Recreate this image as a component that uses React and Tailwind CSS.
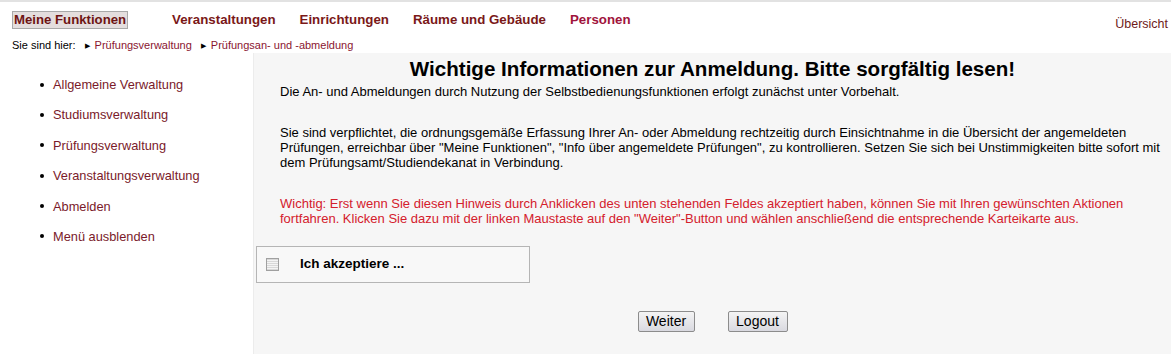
import React from 'react';

const navItems = ['Veranstaltungen', 'Einrichtungen', 'Räume und Gebäude'];

const sideItems = [
  'Allgemeine Verwaltung',
  'Studiumsverwaltung',
  'Prüfungsverwaltung',
  'Veranstaltungsverwaltung',
  'Abmelden',
  'Menü ausblenden',
];

const App = () => {
  return (
    <div className="w-[1171px] h-[354px] overflow-hidden bg-white font-['Liberation_Sans',Arial,sans-serif] text-black">
      {/* top line */}
      <div className="h-[2px] bg-[#e2e2e2]"></div>

      {/* main navigation */}
      <div className="flex items-start h-[34px] pt-[9px]">
        <span className="ml-[12px] px-[1px] border border-[#a9a9a9] bg-[#e4dede] text-[13.2px] leading-[16px] font-bold text-[#6e1414]">
          Meine Funktionen
        </span>
        <div className="flex ml-[44px] gap-[24px]">
          {navItems.map((item) => (
            <span key={item} className="text-[13.3px] leading-[18px] font-bold text-[#7a1818]">
              {item}
            </span>
          ))}
          <span className="text-[13.3px] leading-[18px] font-bold text-[#a0143c]">Personen</span>
        </div>
        <span className="ml-auto mt-[6px] mr-[3px] text-[12.5px] leading-[15px] text-[#6e1a1a]">Übersicht</span>
      </div>

      {/* breadcrumb */}
      <div className="flex items-center h-[17px] pl-[12px] pt-[1px] text-[11px] leading-[13px]">
        <span>Sie sind hier:</span>
        <span className="ml-[9px] mr-[5px] text-[7px] text-black">&#9654;</span>
        <span className="text-[#8a1530]">Prüfungsverwaltung</span>
        <span className="ml-[9px] mr-[5px] text-[7px] text-black">&#9654;</span>
        <span className="text-[#8a1530]">Prüfungsan- und -abmeldung</span>
      </div>

      <div className="flex h-[301px]">
        {/* sidebar */}
        <div className="w-[253px] shrink-0 bg-white pt-[24px]">
          <ul className="flex flex-col gap-[15.4px] pl-[40px]">
            {sideItems.map((item) => (
              <li key={item} className="flex items-center text-[12.8px] leading-[15px] text-[#7a1a2a]">
                <span className="w-[4px] h-[4px] bg-black rounded-full mr-[9px]"></span>
                {item}
              </li>
            ))}
          </ul>
        </div>

        {/* content */}
        <div className="flex-1 bg-[#f6f6f6] border-l border-[#ececec] pt-[4px]">
          <h1 className="text-center text-[20.6px] leading-[24px] font-bold">
            Wichtige Informationen zur Anmeldung. Bitte sorgfältig lesen!
          </h1>
          <div className="pl-[26px] pr-[8px] text-[13px] leading-[15px]">
            <p className="mt-[3px]">
              Die An- und Abmeldungen durch Nutzung der Selbstbedienungsfunktionen erfolgt zunächst unter Vorbehalt.
            </p>
            <p className="mt-[26px]">
              Sie sind verpflichtet, die ordnungsgemäße Erfassung Ihrer An- oder Abmeldung rechtzeitig durch Einsichtnahme in die Übersicht der angemeldeten Prüfungen, erreichbar über "Meine Funktionen", "Info über angemeldete Prüfungen", zu kontrollieren. Setzen Sie sich bei Unstimmigkeiten bitte sofort mit dem Prüfungsamt/Studiendekanat in Verbindung.
            </p>
            <p className="mt-[26px] text-[#d4202c]">
              Wichtig: Erst wenn Sie diesen Hinweis durch Anklicken des unten stehenden Feldes akzeptiert haben, können Sie mit Ihren gewünschten Aktionen fortfahren. Klicken Sie dazu mit der linken Maustaste auf den "Weiter"-Button und wählen anschließend die entsprechende Karteikarte aus.
            </p>
          </div>

          {/* accept box */}
          <div className="mt-[20px] ml-[2px] w-[274px] h-[37px] border border-[#b5b5b5] bg-[#f8f8f8] flex items-center">
            <span className="ml-[9px] w-[13px] h-[13px] border border-[#a0a0a0] bg-[repeating-linear-gradient(0deg,#d8d8d8_0px,#d8d8d8_1px,#f4f4f4_1px,#f4f4f4_2px)]"></span>
            <span className="ml-[21px] text-[13.5px] font-bold">Ich akzeptiere ...</span>
          </div>

          {/* buttons */}
          <div className="flex justify-center gap-[33px] mt-[28px]">
            <button className="h-[21px] w-[57px] border border-[#8c8c8c] rounded-[2px] bg-gradient-to-b from-[#f4f4f4] to-[#d9d9e0] text-[14px] leading-[19px] text-black">
              Weiter
            </button>
            <button className="h-[21px] w-[60px] border border-[#8c8c8c] rounded-[2px] bg-gradient-to-b from-[#f4f4f4] to-[#d9d9e0] text-[14px] leading-[19px] text-black">
              Logout
            </button>
          </div>
        </div>
      </div>
    </div>
  );
};

export default App;
